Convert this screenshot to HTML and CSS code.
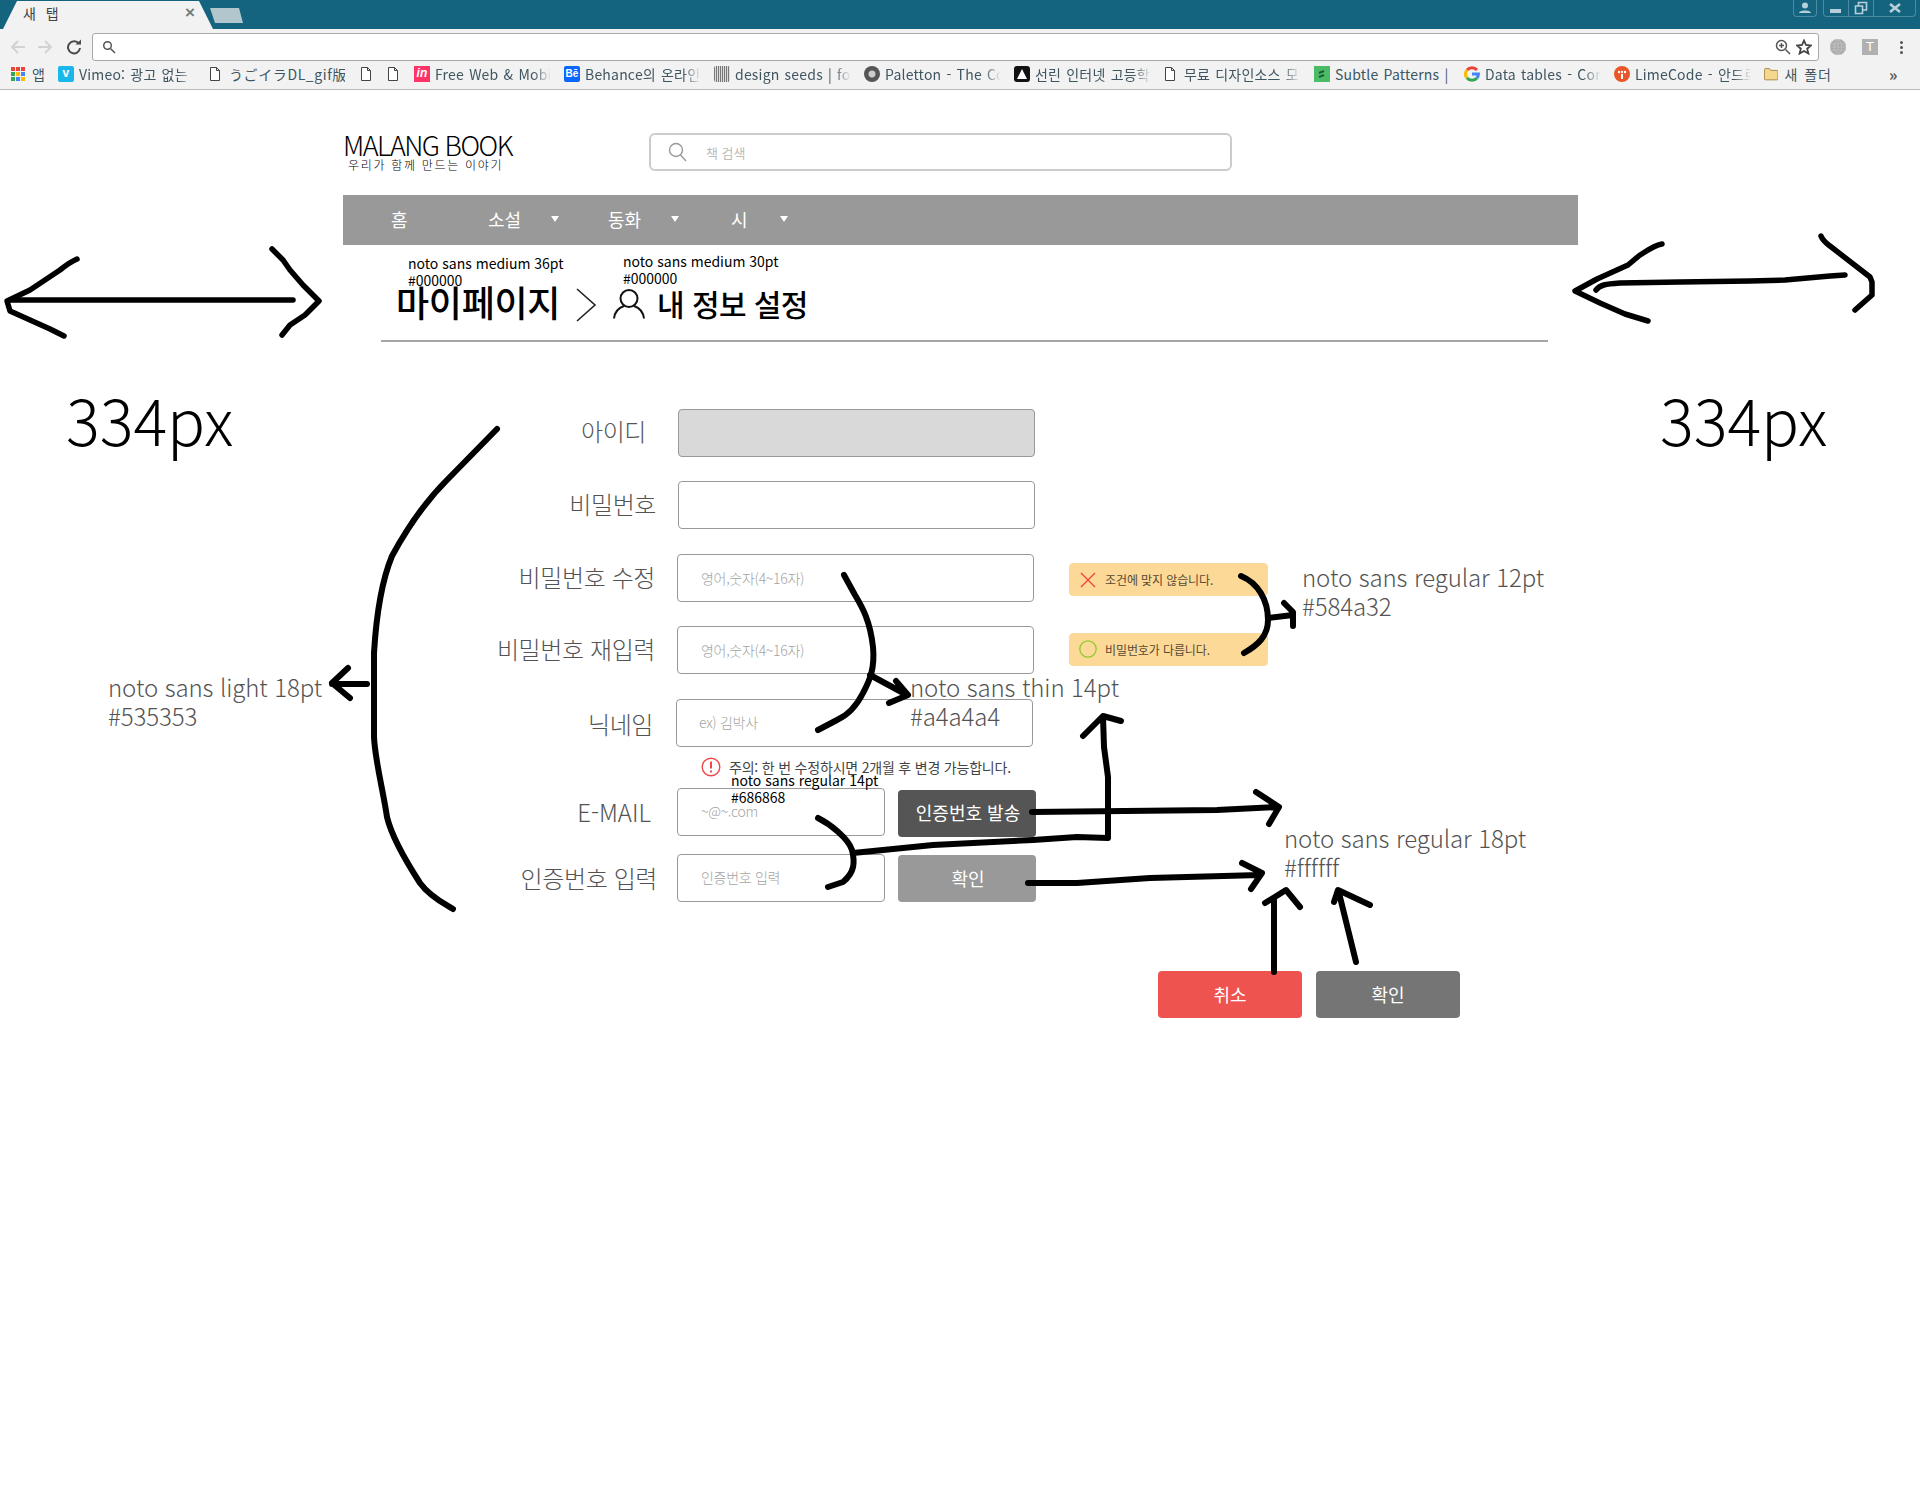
FILE: index.html
```html
<!DOCTYPE html>
<html lang="ko">
  <head>
    <meta charset="UTF-8" />
    <title>내 정보 설정</title>
    <link rel="stylesheet" href="styles.css">
  </head>
  <body>
    <!-- browser frame -->
    <div class="tabstrip">
      <div class="tab">
        <span class="tab-title">새 탭</span>
        <span class="tab-close">×</span>
      </div>
      <div class="tab-new"></div>
      <div class="win-user">
        <svg width="14" height="12" viewBox="0 0 14 12"><circle cx="7" cy="3.5" r="3" /><path d="M1 11 C1 7.5 13 7.5 13 11 Z" /></svg>
      </div>
      <div class="win-buttons">
        <div class="win-btn"><svg width="14" height="12" viewBox="0 0 14 12"><rect x="1" y="7" width="11" height="4" /></svg></div>
        <div class="win-btn"><svg width="14" height="14" viewBox="0 0 14 14"><path class="outline" d="M1.5 5 H8.5 V12.5 H1.5 Z M4.5 5 V1.5 H12.5 V9 H8.5" /></svg></div>
        <div class="win-btn win-close"><svg width="14" height="10" viewBox="0 0 14 10"><path class="outline thick" d="M2 1 L12 9 M12 1 L2 9" /></svg></div>
      </div>
    </div>

    <div class="toolbar">
      <svg class="nav-icon" width="18" height="16" viewBox="0 0 18 16"><path d="M16 8 H3 M9 2 L3 8 L9 14" /></svg>
      <svg class="nav-icon" width="18" height="16" viewBox="0 0 18 16"><path d="M2 8 H15 M9 2 L15 8 L9 14" /></svg>
      <svg class="reload-icon" width="16" height="16" viewBox="0 0 16 16"><path d="M13 5 A6 6 0 1 0 14 9" /><path class="fill" d="M9.5 5.5 H15 V0.5 Z" /></svg>
      <div class="omnibox">
        <svg width="14" height="14" viewBox="0 0 14 14"><circle cx="5.5" cy="5.5" r="3.8" /><path d="M8.5 8.5 L13 13" /></svg>
        <svg class="omni-zoom" width="16" height="16" viewBox="0 0 16 16"><circle cx="6.5" cy="6.5" r="5" /><path d="M10.5 10.5 L15 15 M4 6.5 H9 M6.5 4 V9" /></svg>
        <svg class="omni-star" width="16" height="16" viewBox="0 0 16 16"><path d="M8 1.5 L10 6 L15 6.5 L11.2 9.7 L12.4 14.5 L8 12 L3.6 14.5 L4.8 9.7 L1 6.5 L6 6 Z" /></svg>
      </div>
      <svg class="ext-globe" width="16" height="16" viewBox="0 0 16 16"><circle cx="8" cy="8" r="8" /><path d="M0 5 H16 M0 8 H16 M0 11 H16 M8 0 V16 M8 0 C3 4 3 12 8 16 M8 0 C13 4 13 12 8 16" /></svg>
      <div class="ext-t">T</div>
      <div class="menu-dots"><i></i><i></i><i></i></div>
    </div>

    <div class="bookmarks">
      <div class="bm bm-apps">
        <svg width="14" height="14" viewBox="0 0 14 14">
          <rect width="4" height="4" fill="#e8453c" /><rect x="5" width="4" height="4" fill="#e8453c" /><rect x="10" width="4" height="4" fill="#e8453c" />
          <rect y="5" width="4" height="4" fill="#34a853" /><rect x="5" y="5" width="4" height="4" fill="#fbbc05" /><rect x="10" y="5" width="4" height="4" fill="#4285f4" />
          <rect y="10" width="4" height="4" fill="#34a853" /><rect x="5" y="10" width="4" height="4" fill="#4285f4" /><rect x="10" y="10" width="4" height="4" fill="#fbbc05" />
        </svg>
        <span class="bm-text">앱</span>
      </div>
      <div class="bm bm-wide">
        <span class="fav fav-vimeo">v</span>
        <span class="bm-text fade">Vimeo: 광고 없는 동영상</span>
      </div>
      <div class="bm bm-wide">
        <svg class="fav-file" width="12" height="16" viewBox="0 0 12 16"><path d="M1.5 1.5 H7.5 L10.5 4.5 V14.5 H1.5 Z M7.5 1.5 V4.5 H10.5" /></svg>
        <span class="bm-text bm-jp">うごイラDL_gif版</span>
      </div>
      <div class="bm bm-icon">
        <svg class="fav-file" width="12" height="16" viewBox="0 0 12 16"><path d="M1.5 1.5 H7.5 L10.5 4.5 V14.5 H1.5 Z M7.5 1.5 V4.5 H10.5" /></svg>
      </div>
      <div class="bm bm-icon">
        <svg class="fav-file" width="12" height="16" viewBox="0 0 12 16"><path d="M1.5 1.5 H7.5 L10.5 4.5 V14.5 H1.5 Z M7.5 1.5 V4.5 H10.5" /></svg>
      </div>
      <div class="bm">
        <span class="fav fav-invision">in</span>
        <span class="bm-text fade">Free Web &amp; Mobile</span>
      </div>
      <div class="bm">
        <span class="fav fav-behance">Bē</span>
        <span class="bm-text fade">Behance의 온라인 포</span>
      </div>
      <div class="bm">
        <span class="fav fav-seeds"></span>
        <span class="bm-text fade">design seeds | for</span>
      </div>
      <div class="bm">
        <span class="fav fav-paletton"></span>
        <span class="bm-text fade">Paletton - The Color</span>
      </div>
      <div class="bm">
        <svg width="16" height="16" viewBox="0 0 16 16"><rect width="16" height="16" rx="3" fill="#111" /><path d="M8 3 L13 13 H3 Z" fill="#fff" /></svg>
        <span class="bm-text fade">선린 인터넷 고등학교</span>
      </div>
      <div class="bm">
        <svg class="fav-file" width="12" height="16" viewBox="0 0 12 16"><path d="M1.5 1.5 H7.5 L10.5 4.5 V14.5 H1.5 Z M7.5 1.5 V4.5 H10.5" /></svg>
        <span class="bm-text fade">무료 디자인소스 모음</span>
      </div>
      <div class="bm">
        <svg width="16" height="16" viewBox="0 0 16 16"><rect width="16" height="16" fill="#4bbb68" /><path d="M5 7 L10 5 M5 11 L10 9" stroke="#1f5c33" stroke-width="2" /></svg>
        <span class="bm-text">Subtle Patterns |</span>
      </div>
      <div class="bm">
        <svg width="16" height="16" viewBox="0 0 16 16" fill="none" stroke-width="3">
          <path d="M13 4 A6.5 6.5 0 0 0 3 4" stroke="#ea4335" />
          <path d="M3 4 A6.5 6.5 0 0 0 3 12" stroke="#fbbc05" />
          <path d="M3 12 A6.5 6.5 0 0 0 13 12" stroke="#34a853" />
          <path d="M13 12 A6.5 6.5 0 0 0 14.4 8 H8" stroke="#4285f4" />
        </svg>
        <span class="bm-text fade">Data tables - Compo</span>
      </div>
      <div class="bm">
        <svg width="16" height="16" viewBox="0 0 16 16"><circle cx="8" cy="8" r="8" fill="#e8562a" /><circle cx="5" cy="6" r="1.2" fill="#fff" /><circle cx="8" cy="6" r="1.2" fill="#fff" /><circle cx="11" cy="6" r="1.2" fill="#fff" /><rect x="7" y="8" width="2" height="5" fill="#fff" /></svg>
        <span class="bm-text fade">LimeCode - 안드로이드</span>
      </div>
      <div class="bm bm-folder">
        <svg width="16" height="14" viewBox="0 0 16 14"><path d="M0.5 2 Q0.5 1 1.5 1 H6 L7.5 3 H14.5 Q15.5 3 15.5 4 V12.5 Q15.5 13.5 14.5 13.5 H1.5 Q0.5 13.5 0.5 12.5 Z" fill="#f6d78d" stroke="#a08445" /></svg>
        <span class="bm-text">새 폴더</span>
      </div>
      <span class="bm-more">»</span>
    </div>

    <!-- page -->
    <div class="page">
      <header class="site-head">
        <div class="logo">
          <div class="logo-name">MALANG BOOK</div>
          <div class="logo-sub">우리가 함께 만드는 이야기</div>
        </div>
        <div class="search">
          <svg width="20" height="20" viewBox="0 0 20 20"><circle cx="8" cy="8" r="6.5" /><path d="M12.5 13 L18 19" /></svg>
          <span>책 검색</span>
        </div>
      </header>

      <nav class="main-nav">
        <a class="nav-home">홈</a>
        <a class="nav-novel">소설<i></i></a>
        <a class="nav-tale">동화<i></i></a>
        <a class="nav-poem">시<i></i></a>
      </nav>

      <div class="crumbs">
        <h1 class="crumb-main">마이페이지</h1>
        <svg class="crumb-arrow" width="22" height="34" viewBox="0 0 22 34"><path d="M2 1 L20 17 L2 33" /></svg>
        <svg class="crumb-user" width="32" height="30" viewBox="0 0 32 30"><circle cx="16" cy="9.5" r="8.5" /><path d="M1 29.5 C2 21 8 18 11 17 M31 29.5 C30 21 24 18 21 17" /></svg>
        <h2 class="crumb-sub">내 정보 설정</h2>
      </div>

      <form class="info-form" onsubmit="return false">
        <div class="form-row row-id">
          <label class="field-label">아이디</label>
          <input class="field field-disabled" type="text" disabled />
        </div>
        <div class="form-row row-pw">
          <label class="field-label">비밀번호</label>
          <input class="field" type="password" />
        </div>
        <div class="form-row row-new">
          <label class="field-label">비밀번호 수정</label>
          <input class="field" type="password" placeholder="영어,숫자(4~16자)" />
          <div class="alert">
            <svg width="16" height="16" viewBox="0 0 16 16"><path d="M1 1 L15 15 M15 1 L1 15" stroke="#f4403c" stroke-width="1.3" /></svg>
            <span>조건에 맞지 않습니다.</span>
          </div>
        </div>
        <div class="form-row row-again">
          <label class="field-label">비밀번호 재입력</label>
          <input class="field" type="password" placeholder="영어,숫자(4~16자)" />
          <div class="alert">
            <svg width="18" height="18" viewBox="0 0 18 18"><circle cx="9" cy="9" r="8.2" fill="none" stroke="#8ccb2e" stroke-width="1.3" /></svg>
            <span>비밀번호가 다릅니다.</span>
          </div>
        </div>
        <div class="form-row row-nick">
          <label class="field-label">닉네임</label>
          <input class="field" type="text" placeholder="ex) 김박사" />
        </div>
        <div class="form-note">
          <svg width="20" height="20" viewBox="0 0 20 20"><circle cx="10" cy="10" r="8.8" fill="none" stroke="#f04848" stroke-width="1.4" /><path d="M10 4.5 V11.5 M10 13.5 V15.5" stroke="#f04848" stroke-width="2" /></svg>
          <span>주의: 한 번 수정하시면 2개월 후 변경 가능합니다.</span>
        </div>
        <div class="form-row row-mail">
          <label class="field-label">E-MAIL</label>
          <input class="field field-short" type="text" placeholder="~@~.com" />
          <button class="btn btn-dark" type="button">인증번호 발송</button>
        </div>
        <div class="form-row row-code">
          <label class="field-label">인증번호 입력</label>
          <input class="field field-short" type="text" placeholder="인증번호 입력" />
          <button class="btn btn-gray" type="button">확인</button>
        </div>
        <div class="form-actions">
          <button class="btn btn-red" type="button">취소</button>
          <button class="btn btn-grey-dark" type="submit">확인</button>
        </div>
      </form>
    </div>

    <!-- designer's notes on top of the mockup -->
    <div class="note note-title">noto sans medium 36pt<br />#000000</div>
    <div class="note note-sub">noto sans medium 30pt<br />#000000</div>
    <div class="note note-warn">noto sans regular 14pt<br />#686868</div>
    <div class="note note-big note-side-l">334px</div>
    <div class="note note-big note-side-r">334px</div>
    <div class="note note-spec note-light">noto sans light 18pt<br />#535353</div>
    <div class="note note-spec note-thin">noto sans thin 14pt<br />#a4a4a4</div>
    <div class="note note-spec note-alert">noto sans regular 12pt<br />#584a32</div>
    <div class="note note-spec note-btn">noto sans regular 18pt<br />#ffffff</div>

    <svg class="scribbles" width="1920" height="1500" viewBox="0 0 1920 1500">
      <!-- left margin arrow -->
      <g class="thin">
        <path d="M77 259 C70 262 65 266 60 270 L45 280 L30 290 L7 301 L10 311 L30 320 L50 329 L64 336" />
        <path d="M10 300 H293" />
        <path d="M272 249 L283 260 L290 270 L303 285 L319 301 L305 315 L290 325 L282 335" />
      </g>
      <!-- right margin arrow -->
      <g class="thin">
        <path d="M1662 244 C1655 245 1648 250 1640 255 L1628 265 L1597 279 L1575 291 L1600 303 L1625 314 L1648 321" />
        <path d="M1596 290 C1600 285 1605 284 1620 283 L1680 282 L1750 281 L1785 280 L1830 276 L1845 275" />
        <path d="M1821 236 C1823 241 1826 243 1830 246 L1870 277 L1872 282 V295 L1855 310" />
      </g>
      <!-- label bracket -->
      <path d="M497 429 L447 480 C425 502 405 532 392 556 C380 585 376 620 374 653 L374 737 C375 760 383 790 387 817 C392 838 409 866 420 883 C430 897 445 904 453 909" />
      <path d="M367 684 H332 M348 668 L332 683 L350 698" />
      <!-- placeholder bracket -->
      <path d="M844 575 L855 595 C862 607 870 620 873 647 C875 668 870 680 863 693 C856 707 848 715 837 720 L818 730" />
      <path d="M870 675 L907 695 M896 681 L908 695 L889 703" />
      <path d="M818 818 C830 824 848 838 852 850 C855 862 855 872 843 882 L828 887" />
      <path d="M853 853 L933 845 L1033 840 L1077 837 L1108 838 V777 L1104 747 L1103 717 M1083 736 L1103 716 L1121 721" />
      <!-- button text arrows -->
      <path d="M1032 812 L1217 810 L1278 807 M1256 792 L1279 807 L1269 824" />
      <path d="M1028 883 L1077 883 L1150 878 L1260 875 M1242 863 L1262 873 L1251 889" />
      <path d="M1274 972 V900 M1265 903 L1286 890 L1300 907" />
      <path d="M1356 962 L1340 897 M1334 902 L1338 890 L1370 905" />
      <!-- alert bracket -->
      <path d="M1241 576 C1258 583 1268 600 1268 620 C1268 636 1258 645 1244 653" />
      <path d="M1268 618 L1293 615 M1284 603 L1293 612 L1293 626" />
    </svg>
  </body>
</html>
```

FILE: styles.css
```css
* {
  box-sizing: border-box;
}
html,
body {
  margin: 0;
  padding: 0;
}
body {
  position: relative;
  width: 1920px;
  height: 1500px;
  overflow: hidden;
  background: #fff;
  font-family: "Noto Sans CJK KR", "Noto Sans", sans-serif;
  color: #000;
}

/* browser frame */
.tabstrip {
  display: flex;
  height: 29px;
  background: #14637f;
  position: relative;
}
.tab {
  width: 214px;
  margin-left: 1px;
  height: 29px;
  background: #f2f2f2;
  clip-path: polygon(2px 100%, 16px 1px, 198px 1px, 212px 100%);
  display: flex;
  justify-content: space-between;
  align-items: center;
  padding: 0 20px 4px 22px;
}
.tab-title {
  font-size: 14px;
  letter-spacing: 3px;
  color: #444;
}
.tab-close {
  font-size: 17px;
  color: #6f7f80;
  font-family: "Liberation Sans", sans-serif;
  font-weight: bold;
}
.tab-new {
  width: 34px;
  height: 15px;
  margin: 8px 0 0 -5px;
  background: #b2c6cd;
  clip-path: polygon(0 0, 29px 0, 33px 100%, 5px 100%);
}
.win-user,
.win-buttons {
  height: 17px;
  border: 1px solid #4c8ba1;
  border-top: 0;
  border-radius: 0 0 4px 4px;
  display: flex;
  margin-left: auto;
}
.win-user {
  width: 24px;
  justify-content: center;
  align-items: center;
  margin-right: 6px;
}
.win-buttons {
  width: 93px;
  margin-left: 0;
  margin-right: 4px;
}
.win-btn {
  width: 25px;
  display: flex;
  justify-content: center;
  align-items: center;
  border-right: 1px solid #4c8ba1;
}
.win-close {
  flex: 1;
  border-right: 0;
}
.tabstrip svg {
  fill: #b5d0da;
}
.tabstrip .outline {
  fill: none;
  stroke: #b5d0da;
  stroke-width: 1.6;
}
.tabstrip .thick {
  stroke-width: 2.6;
}

.toolbar {
  height: 32px;
  background: #f2f2f2;
  display: flex;
  align-items: center;
  padding: 4px 0 0 9px;
}
.toolbar svg {
  fill: none;
}
.nav-icon {
  margin-right: 9px;
  stroke: #d2d2d2;
  stroke-width: 2;
}
.reload-icon {
  margin-left: 3px;
  stroke: #4b4b4b;
  stroke-width: 2;
}
.reload-icon .fill {
  fill: #4b4b4b;
  stroke: none;
}
.omnibox {
  width: 1727px;
  height: 28px;
  margin-left: 10px;
  background: #fff;
  border: 1px solid #a9a9a9;
  border-radius: 3px;
  display: flex;
  align-items: center;
  padding: 0 6px 0 9px;
  stroke: #555;
  stroke-width: 1.5;
}
.omni-zoom {
  margin-left: auto;
  margin-right: 5px;
}
.omni-star {
  stroke: #444;
  stroke-width: 1.8;
}
.toolbar .ext-globe {
  flex: none;
  margin-left: 11px;
  fill: #aaa;
  stroke: #c6c6c6;
  stroke-width: 0.7;
}
.ext-t {
  width: 16px;
  height: 16px;
  margin-left: 16px;
  background: #b0b0b0;
  color: #fff;
  font: 13px/16px "Liberation Sans", sans-serif;
  text-align: center;
}
.menu-dots {
  margin-left: 22px;
  display: flex;
  flex-direction: column;
  gap: 2px;
}
.menu-dots i {
  width: 3px;
  height: 3px;
  background: #555;
  border-radius: 50%;
}

.bookmarks {
  height: 29px;
  background: #f2f2f2;
  border-bottom: 1px solid #b9b9b9;
  display: flex;
  align-items: center;
  padding: 0 0 3px 11px;
  font-size: 14px;
  letter-spacing: 0.2px;
  word-spacing: 1px;
  color: #3f5560;
}
.bm {
  width: 150px;
  flex: none;
  display: flex;
  align-items: center;
  gap: 5px;
  white-space: nowrap;
  overflow: hidden;
}
.bm-wide {
  width: 151px;
}
.bm-apps {
  width: 47px;
  gap: 7px;
}
.bm-icon {
  width: 27px;
}
.bm-folder {
  width: 125px;
  gap: 6px;
  letter-spacing: 1px;
}
.bm-text {
  display: block;
  width: 116px;
  overflow: hidden;
}
.bm-apps .bm-text {
  width: auto;
}
.bm-jp {
  letter-spacing: 0.6px;
}
.fade {
  -webkit-mask-image: linear-gradient(to right, #000 85%, transparent);
  mask-image: linear-gradient(to right, #000 85%, transparent);
}
.fav {
  flex: none;
  width: 16px;
  height: 16px;
  border-radius: 2px;
  color: #fff;
  font: bold 12px/15px "Liberation Sans", sans-serif;
  text-align: center;
}
.fav-vimeo {
  background: #1ab7ea;
}
.fav-invision {
  background: #ff3366;
  border-radius: 0;
  font-style: italic;
}
.fav-behance {
  background: #0a66ff;
  font-size: 10px;
}
.fav-seeds {
  background: repeating-linear-gradient(90deg, #777 0 1px, #ddd 1px 2px);
}
.fav-paletton {
  background: radial-gradient(circle at 50% 50%, #ccc 0 3px, #555 4px);
  border-radius: 50%;
}
.fav-file {
  flex: none;
  margin-right: 3px;
  fill: #fff;
  stroke: #444;
}
.bm-more {
  color: #555;
  font-weight: bold;
  font-size: 16px;
}

/* page */
.page {
  width: 1235px;
  margin-left: 343px;
}
.site-head {
  display: flex;
  align-items: flex-start;
  height: 105px;
}
.logo {
  width: 306px;
  padding-top: 39px;
}
.logo-name {
  font-size: 27px;
  line-height: 32px;
  font-weight: 300;
  letter-spacing: -1.5px;
}
.logo-sub {
  margin: -4px 0 0 5px;
  font-size: 12px;
  line-height: 16px;
  font-weight: 300;
  letter-spacing: 1.7px;
}
.search {
  width: 583px;
  height: 38px;
  margin-top: 43px;
  border: 2px solid #ccc;
  border-radius: 6px;
  display: flex;
  align-items: center;
  gap: 18px;
  padding-left: 17px;
  font-size: 13px;
  color: #bcbcbc;
}
.search svg {
  flex: none;
  fill: none;
  stroke: #999;
  stroke-width: 1.4;
}
.main-nav {
  height: 50px;
  background: #999;
  display: flex;
  align-items: center;
  color: #fff;
  font-size: 18px;
  padding: 0 0 3px 48px;
}
.main-nav a {
  display: flex;
  align-items: center;
}
.main-nav i {
  border-left: 4px solid transparent;
  border-right: 4px solid transparent;
  border-top: 6px solid #fff;
  margin-bottom: 0;
}
.nav-home {
  width: 97px;
}
.nav-novel {
  width: 120px;
}
.nav-novel i {
  margin-left: 30px;
}
.nav-tale {
  width: 123px;
}
.nav-tale i {
  margin-left: 30px;
}
.nav-poem i {
  margin-left: 32px;
}

.crumbs {
  margin-left: 38px;
  width: 1167px;
  height: 97px;
  border-bottom: 2px solid #a6a6a6;
  display: flex;
  align-items: flex-start;
  padding: 32px 0 0 15px;
}
.crumb-main {
  margin: 0;
  font-size: 36px;
  line-height: 48px;
  font-weight: 500;
  letter-spacing: -0.3px;
}
.crumb-arrow {
  margin: 11px 0 0 15px;
  fill: none;
  stroke: #222;
  stroke-width: 1.6;
}
.crumb-user {
  margin: 12px 0 0 16px;
  fill: none;
  stroke: #111;
  stroke-width: 2;
}
.crumb-sub {
  margin: 5px 0 0 12px;
  font-size: 30px;
  line-height: 42px;
  font-weight: 500;
  letter-spacing: -0.6px;
}

/* form */
.info-form {
  padding-top: 67px;
}
.form-row {
  display: flex;
  align-items: center;
  height: 48px;
}
.field-label {
  width: 334px;
  text-align: right;
  font-size: 24px;
  font-weight: 300;
  color: #535353;
  letter-spacing: -0.4px;
  white-space: nowrap;
}
.field {
  width: 357px;
  height: 48px;
  border: 1px solid #999;
  border-radius: 4px;
  background: #fff;
  padding: 0 23px;
  font-family: inherit;
  font-size: 14px;
  outline: none;
}
.field::placeholder {
  color: #a4a4a4;
  font-weight: 300;
  letter-spacing: -0.3px;
}
.field-disabled {
  background: #d9d9d9;
}
.field-short {
  width: 208px;
  padding-bottom: 2px;
}
.row-id .field-label {
  width: 335px;
  padding: 0 32px 6px 0;
}
.row-pw {
  margin-top: 24px;
}
.row-pw .field-label {
  width: 335px;
  padding: 0 22px 4px 0;
}
.row-new {
  margin-top: 25px;
}
.row-new .field-label,
.row-again .field-label {
  padding: 0 22px 4px 0;
}
.row-again {
  margin-top: 24px;
}
.row-nick {
  margin-top: 25px;
}
.row-nick .field-label {
  width: 333px;
  padding-right: 23px;
}
.row-nick .field {
  padding: 0 22px 2px;
}
.row-mail .field-label {
  padding: 0 26px 2px 0;
  letter-spacing: 0;
}
.row-code {
  margin-top: 18px;
}
.row-code .field-label {
  padding: 0 20px 2px 0;
}
.alert {
  width: 199px;
  height: 33px;
  margin-left: 35px;
  background: #fdd998;
  border: 1px solid #fbd99e;
  border-radius: 4px;
  display: flex;
  align-items: center;
  font-size: 12px;
  letter-spacing: -0.1px;
  color: #584a32;
}
.alert svg {
  flex: none;
}
.row-new .alert {
  align-self: flex-start;
  gap: 9px;
  margin-top: 9px;
  padding-left: 10px;
}
.row-again .alert {
  align-self: flex-start;
  gap: 8px;
  margin-top: 7px;
  padding: 0 0 1px 9px;
}
.form-note {
  display: flex;
  align-items: center;
  gap: 8px;
  height: 20px;
  margin: 10px 0 11px 358px;
  font-size: 14px;
  letter-spacing: -0.2px;
  color: #444;
}
.btn {
  height: 47px;
  border: 0;
  border-radius: 4px;
  padding-bottom: 2px;
  color: #fff;
  font-family: inherit;
  font-size: 18px;
  cursor: pointer;
}
.btn-dark,
.btn-gray {
  width: 138px;
  margin-left: 13px;
  padding-left: 8px;
  background: #555;
}
.btn-dark {
  align-self: flex-start;
  margin-top: 2px;
  padding-bottom: 4px;
}
.btn-gray {
  background: #999;
}
.form-actions {
  display: flex;
  gap: 14px;
  margin: 69px 0 0 815px;
}
.btn-red,
.btn-grey-dark {
  width: 144px;
}
.btn-red {
  background: #ef5350;
}
.btn-grey-dark {
  background: #757575;
}

/* notes drawn over the mockup */
.note {
  position: absolute;
  white-space: nowrap;
}
.note-title,
.note-sub {
  font-size: 14px;
  line-height: 17px;
}
.note-title {
  left: 408px;
  top: 255px;
}
.note-sub {
  left: 623px;
  top: 253px;
}
.note-warn {
  left: 731px;
  top: 772px;
  font-size: 14px;
  line-height: 17px;
}
.note-big {
  font-size: 63px;
  line-height: 80px;
  font-weight: 300;
  top: 379px;
}
.note-side-l {
  left: 66px;
}
.note-side-r {
  left: 1660px;
}
.note-spec {
  font-size: 24px;
  line-height: 29px;
  font-weight: 300;
  letter-spacing: -0.1px;
  color: #535353;
}
.note-light {
  left: 108px;
  top: 672px;
}
.note-thin {
  left: 910px;
  top: 672px;
}
.note-alert {
  left: 1302px;
  top: 562px;
}
.note-btn {
  left: 1284px;
  top: 823px;
}
.scribbles {
  position: absolute;
  left: 0;
  top: 0;
  pointer-events: none;
  fill: none;
  stroke: #000;
  stroke-width: 6;
  stroke-linecap: round;
  stroke-linejoin: round;
}
.scribbles .thin {
  stroke-width: 5.5;
}
```
